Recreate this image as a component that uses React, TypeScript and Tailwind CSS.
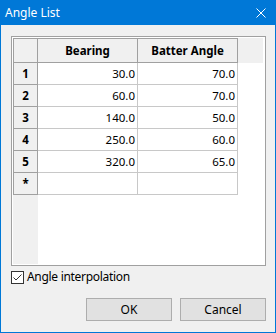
import React from 'react'

interface AngleRow {
  bearing: string
  batter: string
}

const rows: AngleRow[] = [
  { bearing: '30.0', batter: '70.0' },
  { bearing: '60.0', batter: '70.0' },
  { bearing: '140.0', batter: '50.0' },
  { bearing: '250.0', batter: '60.0' },
  { bearing: '320.0', batter: '65.0' },
]

// Windows-style dialog button
const DialogButton = ({ label }: { label: string }) => (
  <button className="w-[86px] h-[23px] bg-[#e1e1e1] border border-[#adadad] text-[12px] text-black leading-none">
    {label}
  </button>
)

export default function App() {
  return (
    <div className="w-[276px] h-[333px] flex flex-col bg-[#0078d7] font-['Segoe_UI','Noto_Sans',sans-serif] text-[11.5px] text-black select-none">
      {/* Title bar */}
      <div className="h-[25px] flex items-center justify-between pl-[5px] pr-[10px] text-white text-[12px]">
        <span className="leading-none">Angle List</span>
        <svg width="10" height="10" viewBox="0 0 10 10" className="mt-px">
          <path d="M0.5 0.5 L9.5 9.5 M9.5 0.5 L0.5 9.5" stroke="white" strokeWidth="1" fill="none" />
        </svg>
      </div>

      {/* Dialog body */}
      <div className="flex-1 mx-px mb-px bg-[#f0f0f0] flex flex-col pl-[10px] pr-[9px] pt-[11px] pb-[11px]">
        {/* Grid frame */}
        <div className="w-[255px] h-[230px] border border-[#a0a0a0] p-px bg-white flex flex-col">
          {/* Header row */}
          <div className="flex h-[25px] bg-[#f0f0f0] mr-[1px]">
            <div className="w-[25px] h-[25px] border border-[#a0a0a0]" />
            <div className="w-[100px] h-[25px] border-y border-r border-[#a0a0a0] flex items-center justify-center font-bold">
              Bearing
            </div>
            <div className="w-[100px] h-[25px] border-y border-r border-[#a0a0a0] flex items-center justify-center font-bold">
              Batter Angle
            </div>
          </div>

          {/* Body rows */}
          <div className="flex flex-1">
            <div className="w-[25px] bg-[#f0f0f0] flex flex-col">
              {rows.map((_, i) => (
                <div
                  key={i}
                  className="h-[22px] border-x border-b border-[#a0a0a0] flex items-center justify-center font-bold"
                >
                  {i + 1}
                </div>
              ))}
              <div className="h-[22px] border-x border-b border-[#a0a0a0] flex items-center justify-center font-bold">
                *
              </div>
            </div>
            <div className="flex flex-col">
              {rows.map((r, i) => (
                <div key={i} className="flex h-[22px]">
                  <div className="w-[100px] border-r border-b border-[#c8c8c8] flex items-center justify-end pr-[2px]">
                    {r.bearing}
                  </div>
                  <div className="w-[100px] border-r border-b border-[#c8c8c8] flex items-center justify-end pr-[2px]">
                    {r.batter}
                  </div>
                </div>
              ))}
              <div className="flex h-[22px]">
                <div className="w-[100px] border-r border-b border-[#c8c8c8]" />
                <div className="w-[100px] border-r border-b border-[#c8c8c8]" />
              </div>
            </div>
          </div>
        </div>

        {/* Checkbox */}
        <label className="flex items-center gap-[3px] mt-[4px] h-[14px] text-[12px]">
          <span className="w-[13px] h-[13px] border border-[#333333] bg-white flex items-center justify-center">
            <svg width="11" height="11" viewBox="0 0 11 11">
              <path d="M1.5 5.5 L4 8 L9.5 2.5" stroke="#333333" strokeWidth="1" fill="none" />
            </svg>
          </span>
          <span className="leading-none tracking-[-0.3px]">Angle interpolation</span>
        </label>

        {/* Buttons */}
        <div className="flex justify-end gap-[8px] mt-auto">
          <DialogButton label="OK" />
          <DialogButton label="Cancel" />
        </div>
      </div>
    </div>
  )
}
